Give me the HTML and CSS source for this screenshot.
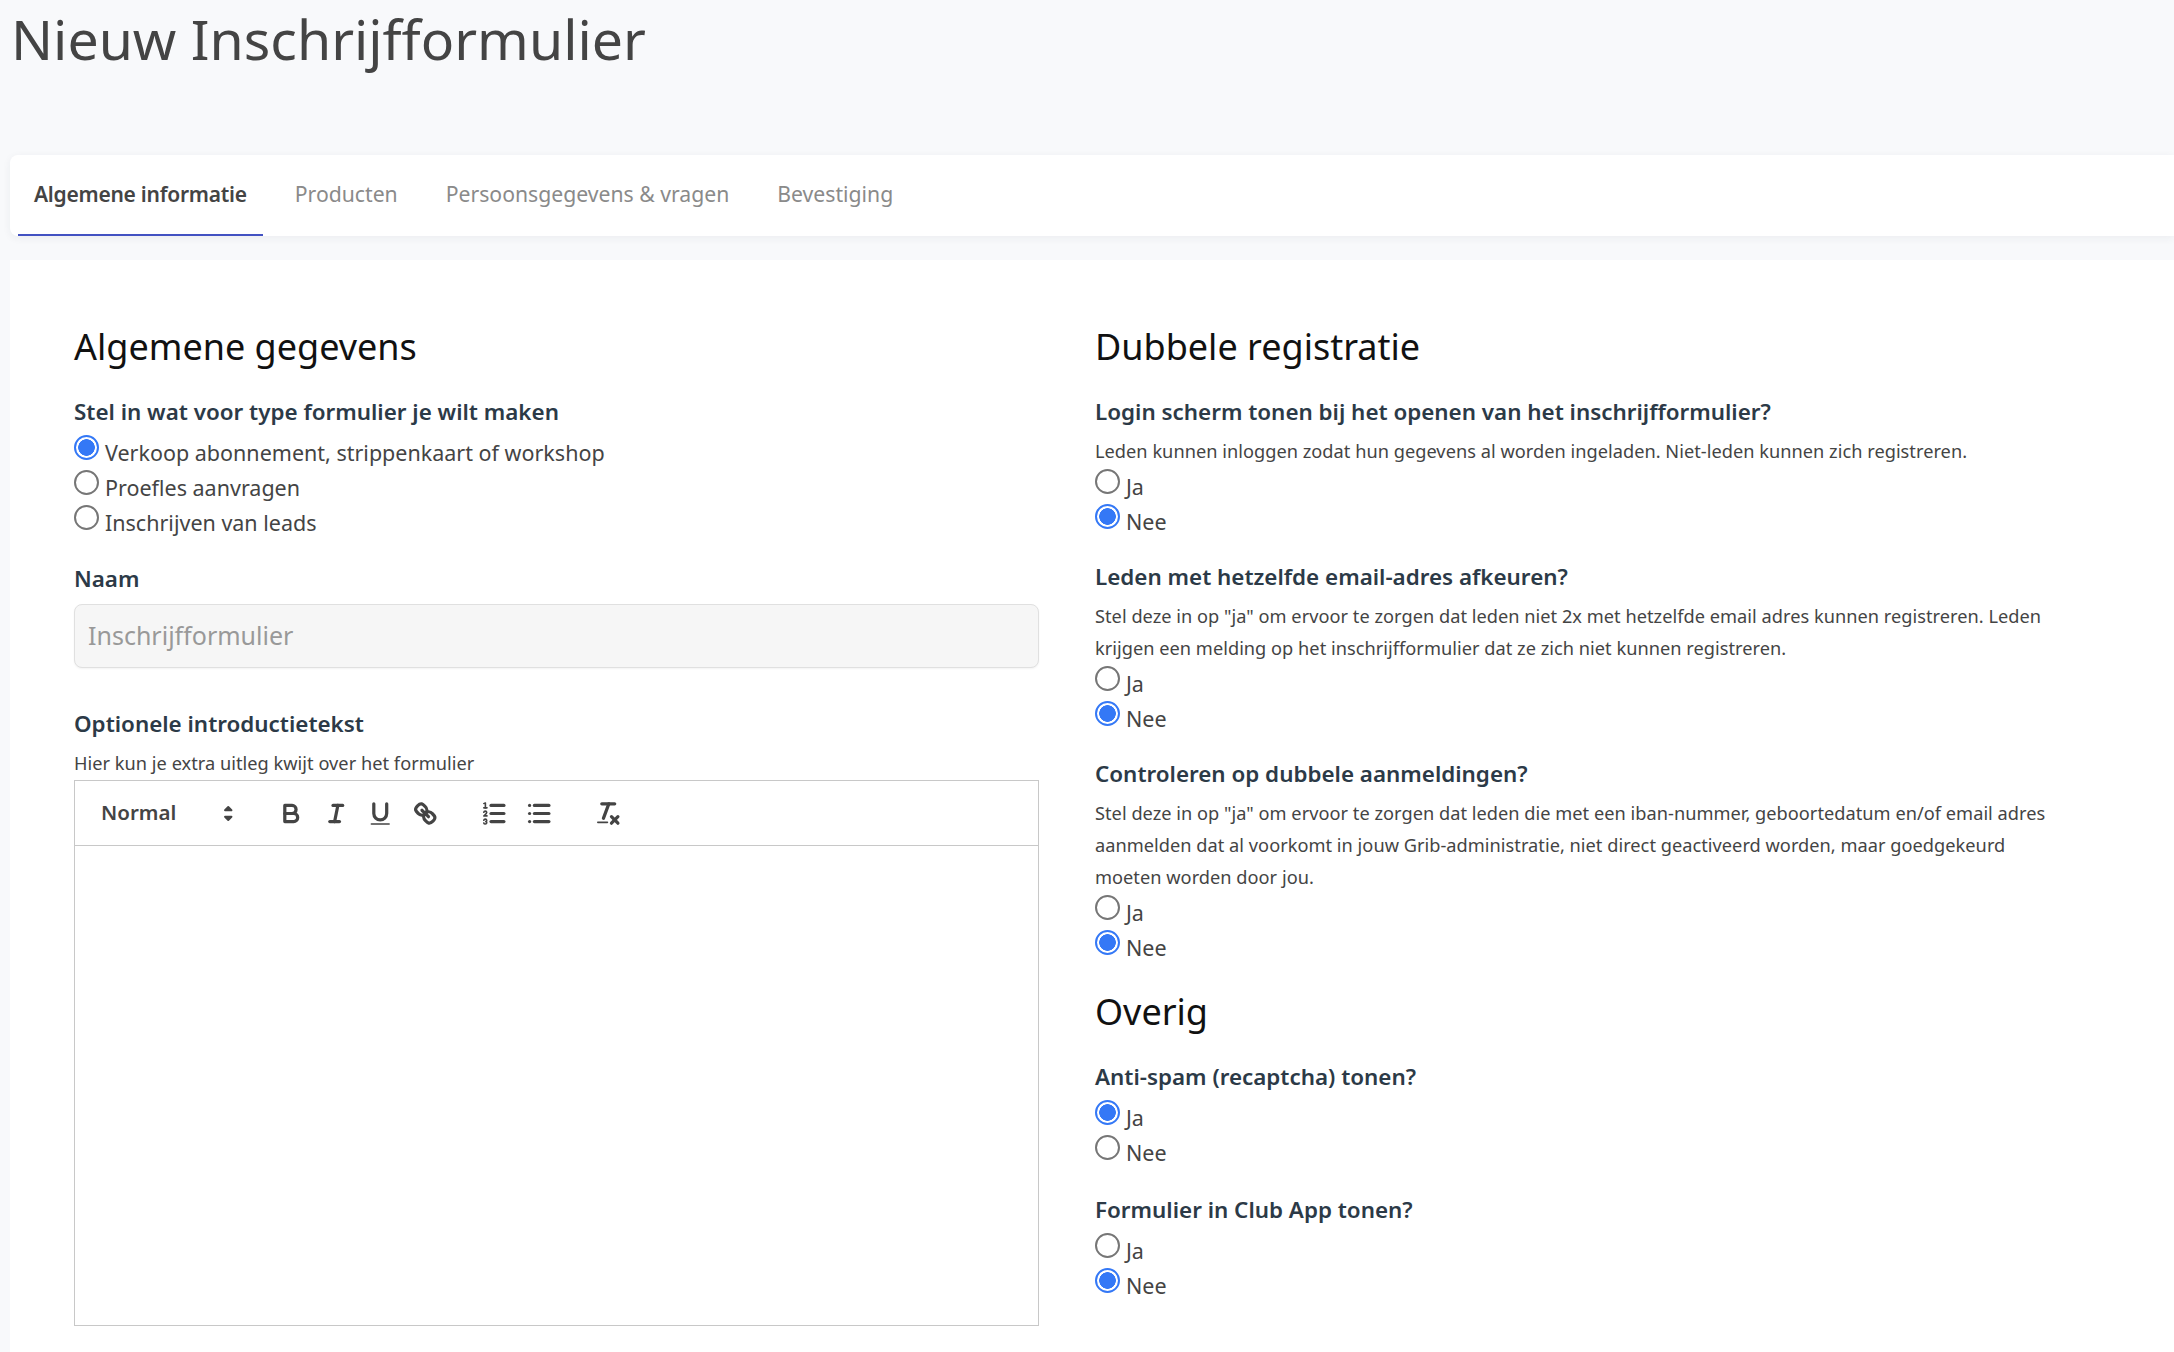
FILE: index.html
```html
<!DOCTYPE html>
<html lang="nl">
<head>
<meta charset="utf-8">
<title>Nieuw Inschrijfformulier</title>
<link rel="stylesheet" href="styles.css">
</head>
<body>
<div class="page">
  <h1 class="title">Nieuw Inschrijfformulier</h1>
  <nav class="tabs">
    <a class="tab active">Algemene informatie</a>
    <a class="tab">Producten</a>
    <a class="tab">Persoonsgegevens &amp; vragen</a>
    <a class="tab">Bevestiging</a>
  </nav>
  <main class="card">
    <section class="col">
      <h2 class="heading">Algemene gegevens</h2>
      <div class="group type-group">
        <div class="label">Stel in wat voor type formulier je wilt maken</div>
        <label class="radio"><input type="radio" name="t" checked><span>Verkoop abonnement, strippenkaart of workshop</span></label>
        <label class="radio"><input type="radio" name="t"><span>Proefles aanvragen</span></label>
        <label class="radio"><input type="radio" name="t"><span>Inschrijven van leads</span></label>
      </div>
      <div class="group">
        <div class="label name-label">Naam</div>
        <input class="text-input" type="text" placeholder="Inschrijfformulier" disabled>
      </div>
      <div class="group intro">
        <div class="label">Optionele introductietekst</div>
        <p class="desc">Hier kun je extra uitleg kwijt over het formulier</p>
        <div class="editor">
          <div class="toolbar">
            <div class="picker"><span class="picker-label">Normal</span>
              <svg class="ic" viewBox="0 0 18 18"><polygon class="st solid" points="7 11 9 13 11 11 7 11"/><polygon class="st solid" points="7 7 9 5 11 7 7 7"/></svg>
            </div>
            <div class="tool-group">
              <svg class="ic" viewBox="0 0 18 18"><path class="st" d="M5,4H9.5A2.5,2.5,0,0,1,12,6.5v0A2.5,2.5,0,0,1,9.5,9H5A0,0,0,0,1,5,9V4A0,0,0,0,1,5,4Z"/><path class="st" d="M5,9h5.5A2.5,2.5,0,0,1,13,11.5v0A2.5,2.5,0,0,1,10.5,14H5a0,0,0,0,1,0,0V9A0,0,0,0,1,5,9Z"/></svg>
              <svg class="ic" viewBox="0 0 18 18"><line class="st" x1="7" x2="13" y1="4" y2="4"/><line class="st" x1="5" x2="11" y1="14" y2="14"/><line class="st" x1="8" x2="10" y1="14" y2="4"/></svg>
              <svg class="ic" viewBox="0 0 18 18"><path class="st" d="M5,3V9a4.012,4.012,0,0,0,4,4H9a4.012,4.012,0,0,0,4-4V3"/><rect class="fill" height="1" rx="0.5" ry="0.5" width="12" x="3" y="15"/></svg>
              <svg class="ic" viewBox="0 0 18 18"><line class="st" x1="7" x2="11" y1="7" y2="11"/><path class="st" d="M8.9,4.577a3.476,3.476,0,0,1,.36,4.679A3.476,3.476,0,0,1,4.577,8.9C3.185,7.5,2.035,6.4,4.217,4.217S7.5,3.185,8.9,4.577Z"/><path class="st" d="M13.423,9.1a3.476,3.476,0,0,0-4.679-.36,3.476,3.476,0,0,0,.36,4.679c1.392,1.392,2.5,2.542,4.679.36S14.815,10.5,13.423,9.1Z"/></svg>
            </div>
            <div class="tool-group">
              <svg class="ic" viewBox="0 0 18 18"><line class="st" x1="7" x2="15" y1="4" y2="4"/><line class="st" x1="7" x2="15" y1="9" y2="9"/><line class="st" x1="7" x2="15" y1="14" y2="14"/><line class="st thin" x1="2.5" x2="4.5" y1="5.5" y2="5.5"/><path class="fill" d="M3.5,6A0.5,0.5,0,0,1,3,5.5V3.085l-0.276.138A0.5,0.5,0,0,1,2.053,3c-0.124-.247-0.023-0.324.224-0.447l1-.5A0.5,0.5,0,0,1,4,2.5v3A0.5,0.5,0,0,1,3.5,6Z"/><path class="st thin" d="M4.5,10.5h-2c0-.234,1.85-1.076,1.85-2.234A0.959,0.959,0,0,0,2.5,8.156"/><path class="st thin" d="M2.5,14.846a0.959,0.959,0,0,0,1.85-.109A0.7,0.7,0,0,0,3.75,14a0.688,0.688,0,0,0,.6-0.736,0.959,0.959,0,0,0-1.85-.109"/></svg>
              <svg class="ic" viewBox="0 0 18 18"><line class="st" x1="6" x2="15" y1="4" y2="4"/><line class="st" x1="6" x2="15" y1="9" y2="9"/><line class="st" x1="6" x2="15" y1="14" y2="14"/><line class="st" x1="3" x2="3" y1="4" y2="4"/><line class="st" x1="3" x2="3" y1="9" y2="9"/><line class="st" x1="3" x2="3" y1="14" y2="14"/></svg>
            </div>
            <div class="tool-group">
              <svg class="ic" viewBox="0 0 18 18"><line class="st" x1="5" x2="13" y1="3" y2="3"/><line class="st" x1="6" x2="9.35" y1="12" y2="3"/><line class="st" x1="11" x2="15" y1="11" y2="15"/><line class="st" x1="15" x2="11" y1="11" y2="15"/><rect class="fill" height="1" rx="0.5" ry="0.5" width="7" x="2" y="14"/></svg>
            </div>
          </div>
          <div class="editor-body"></div>
        </div>
      </div>
    </section>
    <section class="col">
      <h2 class="heading">Dubbele registratie</h2>
      <div class="group">
        <div class="label">Login scherm tonen bij het openen van het inschrijfformulier?</div>
        <p class="desc">Leden kunnen inloggen zodat hun gegevens al worden ingeladen. Niet-leden kunnen zich registreren.</p>
        <label class="radio"><input type="radio" name="a"><span>Ja</span></label>
        <label class="radio"><input type="radio" name="a" checked><span>Nee</span></label>
      </div>
      <div class="group">
        <div class="label">Leden met hetzelfde email-adres afkeuren?</div>
        <p class="desc">Stel deze in op "ja" om ervoor te zorgen dat leden niet 2x met hetzelfde email adres kunnen registreren. Leden krijgen een melding op het inschrijfformulier dat ze zich niet kunnen registreren.</p>
        <label class="radio"><input type="radio" name="b"><span>Ja</span></label>
        <label class="radio"><input type="radio" name="b" checked><span>Nee</span></label>
      </div>
      <div class="group">
        <div class="label">Controleren op dubbele aanmeldingen?</div>
        <p class="desc">Stel deze in op "ja" om ervoor te zorgen dat leden die met een iban-nummer, geboortedatum en/of email adres aanmelden dat al voorkomt in jouw Grib-administratie, niet direct geactiveerd worden, maar goedgekeurd moeten worden door jou.</p>
        <label class="radio"><input type="radio" name="c"><span>Ja</span></label>
        <label class="radio"><input type="radio" name="c" checked><span>Nee</span></label>
      </div>
      <h2 class="heading">Overig</h2>
      <div class="group spam-group">
        <div class="label">Anti-spam (recaptcha) tonen?</div>
        <label class="radio"><input type="radio" name="d" checked><span>Ja</span></label>
        <label class="radio"><input type="radio" name="d"><span>Nee</span></label>
      </div>
      <div class="group">
        <div class="label">Formulier in Club App tonen?</div>
        <label class="radio"><input type="radio" name="e"><span>Ja</span></label>
        <label class="radio"><input type="radio" name="e" checked><span>Nee</span></label>
      </div>
    </section>
  </main>
</div>
</body>
</html>
```
FILE: styles.css
```css
* { box-sizing: border-box; }
html, body { margin: 0; height: 100%; overflow: hidden; }
body {
  background: #f8f9fb;
  color: #444;
  font-family: "Noto Sans", "Open Sans", sans-serif;
}
.page { display: flex; flex-direction: column; height: 100%; padding-left: 10px; }
.title {
  margin: 0;
  height: 155px;
  margin-left: 1px;
  padding-top: 4px;
  font-size: 55.4px;
  line-height: 70px;
  font-weight: 400;
  color: #444;
}
.tabs {
  display: flex;
  height: 81px;
  padding-left: 8px;
  background: #fff;
  border-radius: 8px 0 0 8px;
  box-shadow: 0 2px 8px rgba(40, 50, 70, .06);
}
.tab {
  display: flex;
  align-items: center;
  padding: 0 16px 2px;
  margin-right: 16px;
  font-size: 21.2px;
  color: #8a8a8a;
  border-bottom: 2px solid transparent;
}
.tab.active { font-size: 21px; font-weight: 600; color: #444; border-bottom-color: #4352c2; letter-spacing: -.25px; }
.card {
  flex: 1;
  margin-top: 24px;
  padding: 62px 0 0 64px;
  background: #fff;
  display: grid;
  grid-template-columns: 965px 964px;
  column-gap: 56px;
  align-items: start;
}
.col { display: flex; flex-direction: column; }
.heading {
  margin: 0 0 24px;
  font-size: 36px;
  line-height: 50px;
  font-weight: 400;
  color: #111;
}
.group { margin-bottom: 22px; }
.type-group { margin-bottom: 23px; }
.spam-group { margin-bottom: 24px; }
.label {
  height: 32px;
  line-height: 32px;
  margin-bottom: 7px;
  font-size: 22.4px;
  font-weight: 600;
  color: #2c3a47;
}
.label + .radio { margin-top: 1px; }
.name-label { margin-bottom: 9px; }
.desc {
  margin: 0 0 2px;
  font-size: 18.2px;
  letter-spacing: .03px;
  line-height: 32px;
  color: #444;
}
.radio {
  display: flex;
  align-items: center;
  gap: 6px;
  height: 35px;
  font-size: 21.5px;
  color: #444;
}
.radio input {
  appearance: none;
  margin: 0 0 11px;
  width: 25px;
  height: 25px;
  flex: none;
  border: 2px solid #767676;
  border-radius: 50%;
  background: #fff;
}
.radio input:checked {
  border-color: #3478f6;
  background: radial-gradient(circle, #3478f6 0 8px, #fff 8.6px);
}
.text-input {
  display: block;
  width: 100%;
  height: 64px;
  padding: 0 13px 3px;
  border: 1px solid #e0e0e0;
  border-radius: 8px;
  background: #f6f6f6;
  font: inherit;
  font-size: 25px;
  box-shadow: 0 1px 2px rgba(0, 0, 0, .05);
}
.text-input::placeholder { color: #999; opacity: 1; }
.intro { margin-top: 18px; margin-bottom: 0; }
.intro .desc { margin-bottom: 1px; }
.editor { border: 1px solid #c8c8c8; height: 546px; display: flex; flex-direction: column; }
.toolbar {
  display: flex;
  align-items: center;
  height: 65px;
  padding-left: 26px;
  border-bottom: 1px solid #c8c8c8;
}
.picker {
  display: flex;
  align-items: center;
  justify-content: space-between;
  width: 149px;
  font-size: 20.5px;
  font-weight: 600;
  color: #444;
}
.picker-label { padding-bottom: 2px; }
.tool-group { display: flex; margin-left: 19px; }
.tool-group + .tool-group { margin-left: 25px; }
.ic { width: 44.5px; height: 29px; padding: 0; flex: none; }
.st { fill: none; stroke: #444; stroke-width: 2; stroke-linecap: round; stroke-linejoin: round; }
.st.thin { stroke-width: 1; }
.st.solid { fill: #444; stroke-width: 1.2; }
.fill { fill: #444; }
.editor-body { flex: 1; }
```
